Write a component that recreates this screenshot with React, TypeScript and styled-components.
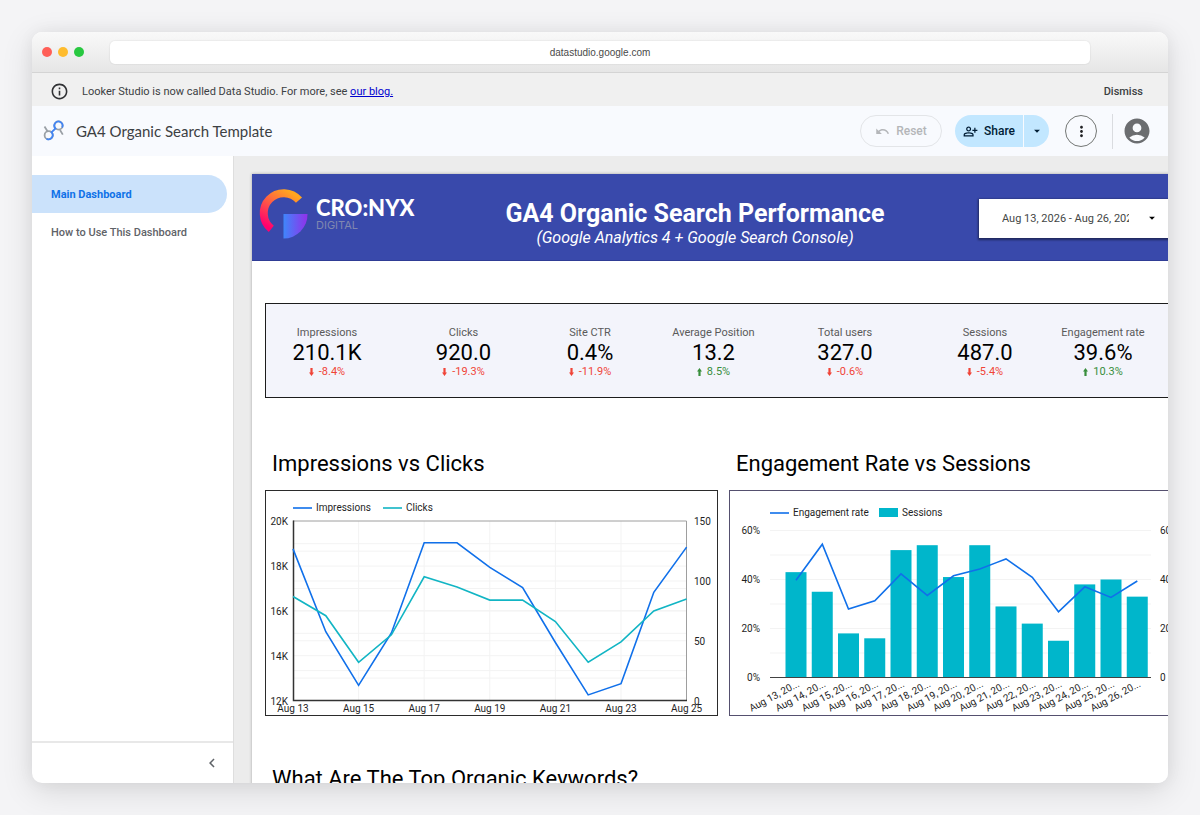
import React from 'react'
import styled, { createGlobalStyle } from 'styled-components'
import {
    MdAccountCircle,
    MdArrowDropDown,
    MdChevronLeft,
    MdInfoOutline,
    MdMoreVert,
    MdOutlinePersonAddAlt,
    MdUndo,
} from 'react-icons/md'

const GlobalStyle = createGlobalStyle`
    * {
        box-sizing: border-box;
    }

    body {
        margin: 0;
        background: #f4f4f6;
        font-family: Roboto, 'Liberation Sans', sans-serif;
        color: #3c4043;
    }

    button, input {
        font-family: inherit;
        color: inherit;
        border: 0;
        padding: 0;
        background: none;
    }

    button {
        cursor: pointer;
    }

    h1, h2, p, dl, dd {
        margin: 0;
        font-weight: 400;
    }
`;

const Page = styled.div`
    height: 100vh;
    padding: 32px;
`;

const Window = styled.div`
    height: 100%;
    display: flex;
    flex-direction: column;
    overflow: hidden;
    border-radius: 10px;
    background: white;
    box-shadow: 0 8px 32px rgba(0, 0, 0, 0.12), 0 0 16px rgba(0, 0, 0, 0.05);
`;

const TitleBar = styled.div`
    height: 41px;
    flex-shrink: 0;
    display: flex;
    align-items: center;
    padding: 0 78px 0 10px;
    background: linear-gradient(#f9f9f9, #e6e6e6);
    border-bottom: 1px solid #d4d4d4;
`;

const Lights = styled.div`
    display: flex;
    gap: 6px;
    margin-right: 26px;
`;

const Light = styled.span<{ $color: string }>`
    width: 10px;
    height: 10px;
    border-radius: 50%;
    background: ${({ $color }) => $color};
`;

const Address = styled.input`
    flex: 1;
    min-width: 0;
    height: 23px;
    border-radius: 5px;
    background: white;
    box-shadow: 0 0 1px 1px rgba(0, 0, 0, 0.04);
    font-family: 'Liberation Sans', sans-serif;
    font-size: 10px;
    text-align: center;
    color: #4a4a4a;
`;

const Notice = styled.div`
    height: 33px;
    flex-shrink: 0;
    display: flex;
    align-items: center;
    padding: 4px 25px 0 18px;
    background: #f0f0f0;
    font-size: 11px;

    svg {
        margin-right: 13px;
        color: #303134;
    }

    p {
        flex: 1;
    }

    a {
        color: #0000cf;
    }
`;

const Dismiss = styled.button`
    font-size: 11px;
    font-weight: 500;
`;

const Header = styled.header`
    height: 50px;
    flex-shrink: 0;
    display: flex;
    align-items: center;
    padding: 0 16px 0 11px;
    background: #f8fafe;
`;

const HeaderTitle = styled.h1`
    flex: 1;
    margin-left: 11px;
    font-family: Lato, sans-serif;
    font-size: 15px;
    line-height: 20px;
    color: #3c4043;
`;

const ResetButton = styled.button`
    width: 82px;
    height: 32px;
    display: flex;
    align-items: center;
    justify-content: center;
    gap: 6px;
    border: 1px solid #e3e5e8;
    border-radius: 16px;
    font-size: 12px;
    font-weight: 500;
    color: #b4b6b9;
`;

const ShareGroup = styled.div`
    display: flex;
    height: 32px;
    margin: 0 16px 0 13px;
    gap: 1px;
    border-radius: 16px;
    overflow: hidden;
    color: #001d35;
`;

const ShareButton = styled.button`
    width: 68px;
    display: flex;
    align-items: center;
    justify-content: center;
    gap: 6px;
    background: #c2e7ff;
    font-size: 12px;
    font-weight: 500;
`;

const ShareMenuButton = styled.button`
    width: 25px;
    display: flex;
    align-items: center;
    justify-content: center;
    background: #c2e7ff;
`;

const MoreButton = styled.button`
    width: 32px;
    height: 32px;
    display: flex;
    align-items: center;
    justify-content: center;
    border: 1px solid #747775;
    border-radius: 50%;
    color: #202124;
`;

const AccountButton = styled.button`
    display: flex;
    height: 35px;
    align-items: center;
    margin-left: 15px;
    padding-left: 9px;
    border-left: 1px solid #dadce0;
    color: #6b6d70;
`;

const Body = styled.div`
    flex: 1;
    min-height: 0;
    display: flex;
`;

const Sidebar = styled.nav`
    width: 202px;
    flex-shrink: 0;
    display: flex;
    flex-direction: column;
    border-right: 1px solid #dedede;
`;

const PageList = styled.div`
    flex: 1;
    padding: 19px 6px 0 0;
`;

const PageLink = styled.a<{ $active?: boolean }>`
    display: flex;
    align-items: center;
    height: 38px;
    padding-left: 19px;
    border-radius: 0 19px 19px 0;
    font-size: 11px;
    font-weight: ${({ $active }) => ($active ? 700 : 500)};
    text-decoration: none;
    color: ${({ $active }) => ($active ? '#1072e8' : '#5f6368')};
    background: ${({ $active }) => ($active ? '#cbe2fb' : 'transparent')};
`;

const SidebarFooter = styled.div`
    height: 42px;
    display: flex;
    align-items: center;
    justify-content: flex-end;
    padding-right: 12px;
    border-top: 2px solid #e8e8e8;

    button {
        display: flex;
        color: #5f6368;
    }
`;

const Viewport = styled.main`
    flex: 1;
    min-width: 0;
    overflow: auto;
    scrollbar-width: none;
    padding: 18px 0 0 18px;
    background: #ececec;
`;

const Report = styled.div`
    min-width: 943px;
    padding-bottom: 40px;
    background: white;
    box-shadow: 0 0 3px rgba(0, 0, 0, 0.3);
`;

const ReportHeader = styled.div`
    height: 87px;
    display: flex;
    align-items: center;
    padding-right: 13px;
    background: #3949ab;
    border-bottom: 1px solid #2f3c95;
    color: white;
`;

const ReportTitle = styled.div`
    flex: 1;
    margin-right: 8px;
    padding-top: 14px;
    text-align: center;

    h1 {
        font-size: 25px;
        line-height: 28px;
        font-weight: 700;
    }

    p {
        font-size: 16px;
        line-height: 20px;
        font-style: italic;
    }
`;

const DateRange = styled.button`
    width: 203px;
    height: 39px;
    display: flex;
    align-items: center;
    gap: 16px;
    margin-top: 2px;
    padding: 0 23px;
    background: white;
    box-shadow: 0 1px 2px 1px rgba(0, 0, 0, 0.45);
    font-size: 11px;
    color: #444746;

    span {
        width: 127px;
        overflow: hidden;
        white-space: nowrap;
        text-align: left;
    }

    svg {
        flex-shrink: 0;
        color: black;
    }
`;

const Scorecards = styled.dl`
    display: grid;
    grid-template-columns: 122px 151px 102px 145px 118px 162px 74px;
    align-content: center;
    height: 95px;
    margin: 42px 13px 0;
    border: 1px solid #1c1c1c;
    background: #f3f4fb;
`;

const Scorecard = styled.div`
    display: flex;
    flex-direction: column;
    align-items: center;
    padding-top: 4px;
    white-space: nowrap;

    dt {
        font-size: 11px;
        line-height: 14px;
        color: #5a5a5a;
    }
`;

const Value = styled.dd`
    font-size: 22px;
    line-height: 25px;
    color: black;
`;

const Delta = styled.dd<{ $up: boolean }>`
    display: flex;
    align-items: center;
    gap: 5px;
    font-size: 11px;
    line-height: 14px;
    color: ${({ $up }) => ($up ? '#388e3c' : '#f04438')};
`;

const ChartGrid = styled.div`
    display: grid;
    grid-template-columns: 1fr 1fr;
    column-gap: 11px;
    margin: 52px 13px 0;
`;

const SectionTitle = styled.h2`
    padding-left: 7px;
    font-size: 22px;
    line-height: 28px;
    color: black;
`;

const ChartBox = styled.div<{ $border: string }>`
    margin-top: 12px;
    border: 1px solid ${({ $border }) => $border};

    svg {
        display: block;
        width: 100%;
    }

    text {
        font-size: 10px;
        fill: #1f1f1f;
    }
`;

const Keywords = styled.section`
    margin: 49px 13px 0;
`;

const scorecards = [
    { label: 'Impressions', value: '210.1K', delta: '-8.4%' },
    { label: 'Clicks', value: '920.0', delta: '-19.3%' },
    { label: 'Site CTR', value: '0.4%', delta: '-11.9%' },
    { label: 'Average Position', value: '13.2', delta: '8.5%' },
    { label: 'Total users', value: '327.0', delta: '-0.6%' },
    { label: 'Sessions', value: '487.0', delta: '-5.4%' },
    { label: 'Engagement rate', value: '39.6%', delta: '10.3%' },
]

const impressions = [18.77, 15.07, 12.68, 15.02, 19.04, 19.04, 17.94, 17.04, 14.59, 12.25, 12.75, 16.83, 18.85]
const clicks = [87, 71, 32, 55, 103.5, 95, 84, 84, 66, 32, 49, 75, 85]

const sessions = [43, 35, 18, 16, 52, 54, 41, 54, 29, 22, 15, 38, 40, 33]
const engagement = [39.7, 54.4, 27.9, 31.3, 42.3, 33.5, 41.5, 44.3, 48.4, 40.9, 26.8, 37, 32.7, 39.4]

const range = (n: number) => Array.from({ length: n }, (_, i) => i)

const toPoints = (values: number[], x: (i: number) => number, y: (v: number) => number) =>
    values.map((v, i) => `${x(i).toFixed(1)},${y(v).toFixed(1)}`).join(' ')

function ProductLogo() {
    return (
        <svg width="22" height="22" viewBox="0 0 22 22" fill="none" strokeWidth="1.8" aria-hidden="true">
            <path d="M1.500 6.500l3 4.800M17 10l2.800 4.600" stroke="#9aa0a6" />
            <circle cx="5.700" cy="15.300" r="4.100" stroke="#9aa0a6" />
            <circle cx="15.500" cy="5.500" r="4.100" stroke="#9aa0a6" />
            <path d="M3.500 18.700a4.100 4.100 0 0 0 5-6.400l4-3.800a4.100 4.100 0 1 1 6.600-1" stroke="#4285f4" />
        </svg>
    )
}

function BrandLogo() {
    return (
        <svg width="167" height="86" viewBox="0 0 167 86" role="img" aria-label="CRO:NYX Digital">
            <defs>
                <linearGradient id="arc" x1="0.8" y1="0" x2="0.2" y2="1">
                    <stop offset="0" stopColor="#ffa51f" />
                    <stop offset="0.5" stopColor="#ff5548" />
                    <stop offset="1" stopColor="#ff006e" />
                </linearGradient>
                <linearGradient id="wedge" x1="0" y1="0" x2="1" y2="0">
                    <stop offset="0" stopColor="#3f86fb" />
                    <stop offset="1" stopColor="#9130ea" />
                </linearGradient>
            </defs>
            <path d="M47 26.200a20 20 0 1 0-27.700 28.600" fill="none" stroke="url(#arc)" strokeWidth="8" />
            <path d="M31.500 40h24a24 24 0 0 1-24 24.500z" fill="url(#wedge)" />
            <text x="64" y="42" fontFamily="Lato, sans-serif" fontWeight="900" fontSize="22" fill="white">CRO:NYX</text>
            <text x="64" y="55" fontFamily="Inter, sans-serif" fontWeight="400" fontSize="11" fill="#8087b0">DIGITAL</text>
        </svg>
    )
}

function DeltaArrow({ up }: { up: boolean }) {
    return (
        <svg width="5" height="8" viewBox="0 0 5 8" fill="currentColor" aria-hidden="true">
            <path d={up ? 'M2.500 0L5 3.500H3.600V8H1.400V3.500H0z' : 'M2.500 8L5 4.500H3.600V0H1.400v4.500H0z'} />
        </svg>
    )
}

function ClicksChart() {
    const x = (i: number) => 27 + i * 32.8
    const yLeft = (v: number) => 209.5 - (v - 12) * 22.4
    const yRight = (v: number) => 209.5 - v * 1.195

    return (
        <svg viewBox="0 0 451 224" role="img" aria-label="Impressions vs Clicks">
            <path d="M27 17h19" stroke="#1070ea" strokeWidth="1.600" />
            <text x="50" y="20">Impressions</text>
            <path d="M117 17h19" stroke="#12b5c4" strokeWidth="1.600" />
            <text x="140" y="20">Clicks</text>

            <g stroke="#f3f3f3">
                {range(7).map(i => <line key={`l${i}`} x1="27" x2="421" y1={yLeft(i + 13)} y2={yLeft(i + 13)} />)}
                {range(5).map(i => <line key={`r${i}`} x1="27" x2="421" y1={yRight((i + 1) * 25)} y2={yRight((i + 1) * 25)} />)}
                {range(5).map(i => <line key={`v${i}`} x1={x(i * 2 + 2)} x2={x(i * 2 + 2)} y1="30" y2="209" />)}
            </g>
            <path d="M27 30h393.500V209" fill="none" stroke="#9e9e9e" />
            <path d="M27.500 29.500v180H421" fill="none" stroke="#333" strokeWidth="1.500" />

            <polyline points={toPoints(impressions, x, yLeft)} fill="none" stroke="#1070ea" strokeWidth="1.600" />
            <polyline points={toPoints(clicks, x, yRight)} fill="none" stroke="#12b5c4" strokeWidth="1.600" />

            {[12, 14, 16, 18, 20].map(v => <text key={v} x="22" y={yLeft(v) + 4} textAnchor="end">{v}K</text>)}
            {[0, 50, 100, 150].map(v => <text key={v} x="428" y={yRight(v) + 4}>{v}</text>)}
            {range(7).map(i => <text key={i} x={x(i * 2)} y="221" textAnchor="middle">Aug {13 + i * 2}</text>)}
        </svg>
    )
}

function EngagementChart() {
    const x = (i: number) => 66 + i * 26.25
    const y = (v: number) => 186.5 - v * 2.45

    return (
        <svg viewBox="0 0 451 224" role="img" aria-label="Engagement Rate vs Sessions">
            <path d="M40 22h19" stroke="#1070ea" strokeWidth="1.600" />
            <text x="63" y="25">Engagement rate</text>
            <rect x="149" y="17" width="19" height="9" fill="#00b6cb" />
            <text x="172" y="25">Sessions</text>

            <g stroke="#f3f3f3">
                {range(6).map(i => <line key={i} x1="40" x2="421" y1={y((i + 1) * 10)} y2={y((i + 1) * 10)} />)}
            </g>
            {sessions.map((v, i) => (
                <rect key={i} x={x(i) - 10.5} y={y(v)} width="21" height={186.5 - y(v)} fill="#00b6cb" />
            ))}
            <path d="M40 186.500h381" stroke="#424242" />
            <polyline points={toPoints(engagement, x, y)} fill="none" stroke="#1070ea" strokeWidth="1.600" />

            {[0, 20, 40, 60].map(v => (
                <React.Fragment key={v}>
                    <text x="30" y={y(v) + 3} textAnchor="end">{v}%</text>
                    <text x="430" y={y(v) + 3}>{v}</text>
                </React.Fragment>
            ))}
            {sessions.map((_, i) => (
                <text key={i} textAnchor="end" transform={`translate(${x(i) + 4} 195) rotate(-28)`}>Aug {13 + i}, 20...</text>
            ))}
        </svg>
    )
}

export default function App() {
    return (
        <Page>
            <GlobalStyle />
            <Window>
                <TitleBar>
                    <Lights>
                        <Light $color="#ff5f57" />
                        <Light $color="#febc2e" />
                        <Light $color="#28c840" />
                    </Lights>
                    <Address type="text" aria-label="Address" defaultValue="datastudio.google.com" />
                </TitleBar>

                <Notice>
                    <MdInfoOutline size={19} />
                    <p>Looker Studio is now called Data Studio. For more, see <a href="#blog">our blog.</a></p>
                    <Dismiss type="button">Dismiss</Dismiss>
                </Notice>

                <Header>
                    <ProductLogo />
                    <HeaderTitle>GA4 Organic Search Template</HeaderTitle>
                    <ResetButton type="button"><MdUndo size={15} />Reset</ResetButton>
                    <ShareGroup>
                        <ShareButton type="button"><MdOutlinePersonAddAlt size={15} />Share</ShareButton>
                        <ShareMenuButton type="button" aria-label="Share options"><MdArrowDropDown size={14} /></ShareMenuButton>
                    </ShareGroup>
                    <MoreButton type="button" aria-label="More options"><MdMoreVert size={17} /></MoreButton>
                    <AccountButton type="button" aria-label="Account"><MdAccountCircle size={30} /></AccountButton>
                </Header>

                <Body>
                    <Sidebar>
                        <PageList>
                            <PageLink href="#main" $active>Main Dashboard</PageLink>
                            <PageLink href="#how-to">How to Use This Dashboard</PageLink>
                        </PageList>
                        <SidebarFooter>
                            <button type="button" aria-label="Collapse"><MdChevronLeft size={18} /></button>
                        </SidebarFooter>
                    </Sidebar>

                    <Viewport>
                        <Report>
                            <ReportHeader>
                                <BrandLogo />
                                <ReportTitle>
                                    <h1>GA4 Organic Search Performance</h1>
                                    <p>(Google Analytics 4 + Google Search Console)</p>
                                </ReportTitle>
                                <DateRange type="button">
                                    <span>Aug 13, 2026 - Aug 26, 2026</span>
                                    <MdArrowDropDown size={14} />
                                </DateRange>
                            </ReportHeader>

                            <Scorecards>
                                {scorecards.map(({ label, value, delta }) => {
                                    const up = !delta.startsWith('-')
                                    return (
                                        <Scorecard key={label}>
                                            <dt>{label}</dt>
                                            <Value>{value}</Value>
                                            <Delta $up={up}><DeltaArrow up={up} />{delta}</Delta>
                                        </Scorecard>
                                    )
                                })}
                            </Scorecards>

                            <ChartGrid>
                                <section>
                                    <SectionTitle>Impressions vs Clicks</SectionTitle>
                                    <ChartBox $border="#2b2b2b"><ClicksChart /></ChartBox>
                                </section>
                                <section>
                                    <SectionTitle>Engagement Rate vs Sessions</SectionTitle>
                                    <ChartBox $border="#55506f"><EngagementChart /></ChartBox>
                                </section>
                            </ChartGrid>

                            <Keywords>
                                <SectionTitle>What Are The Top Organic Keywords?</SectionTitle>
                            </Keywords>
                        </Report>
                    </Viewport>
                </Body>
            </Window>
        </Page>
    )
}
